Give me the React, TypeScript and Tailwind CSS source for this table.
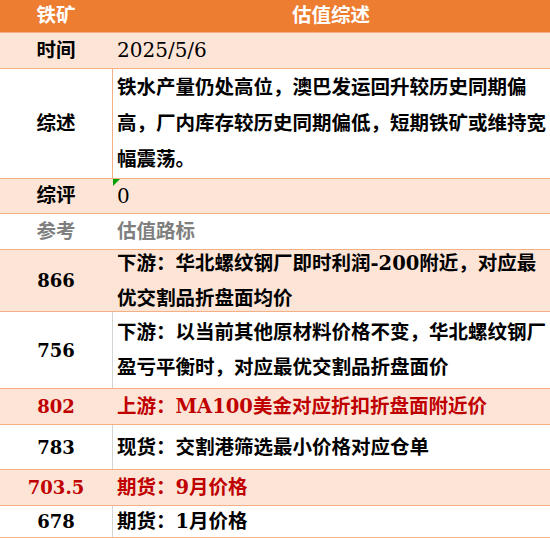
const font = {
  fontFamily: '"DejaVu Serif", "Noto Sans CJK SC", serif',
};

type Row = {
  label: string;
  body: React.ReactNode;
  h: string;
  peach?: boolean;
  red?: boolean;
  grey?: boolean;
  divider?: "orange" | "grey";
  labelNumber?: boolean;
  lead?: string;
  flag?: boolean;
};

const rows: Row[] = [
  {
    label: "时间",
    body: <span className="text-[20px] font-normal">2025/5/6</span>,
    h: "h-[36px]",
    peach: true,
  },
  {
    label: "综述",
    body: (
      <>
        铁水产量仍处高位，澳巴发运回升较历史同期偏
        <br />
        高，厂内库存较历史同期偏低，短期铁矿或维持宽
        <br />
        幅震荡。
      </>
    ),
    h: "h-[110px]",
    divider: "orange",
    lead: "leading-[36px]",
  },
  {
    label: "综评",
    body: <span className="text-[20px] font-normal">0</span>,
    h: "h-[35px]",
    peach: true,
    flag: true,
  },
  { label: "参考", body: "估值路标", h: "h-[36px]", grey: true },
  {
    label: "866",
    body: (
      <>
        下游：华北螺纹钢厂即时利润-200附近，对应最
        <br />
        优交割品折盘面均价
      </>
    ),
    h: "h-[62px]",
    peach: true,
    labelNumber: true,
  },
  {
    label: "756",
    body: (
      <>
        下游：以当前其他原材料价格不变，华北螺纹钢厂
        <br />
        盈亏平衡时，对应最优交割品折盘面价
      </>
    ),
    h: "h-[77px]",
    divider: "grey",
    labelNumber: true,
  },
  {
    label: "802",
    body: "上游：MA100美金对应折扣折盘面附近价",
    h: "h-[36px]",
    peach: true,
    red: true,
    labelNumber: true,
  },
  {
    label: "783",
    body: "现货：交割港筛选最小价格对应仓单",
    h: "h-[45px]",
    divider: "grey",
    labelNumber: true,
  },
  {
    label: "703.5",
    body: "期货：9月价格",
    h: "h-[36px]",
    peach: true,
    red: true,
    labelNumber: true,
  },
  {
    label: "678",
    body: "期货：1月价格",
    h: "h-[32px]",
    divider: "grey",
    labelNumber: true,
  },
];

export default function App() {
  return (
    <div className="w-[550px] h-[538px] overflow-hidden bg-white" style={font}>
      <div className="flex h-[33px] bg-[#ED7D31] text-white font-bold text-[19.5px] border-b border-[#F4B084]">
        <div className="w-[112px] flex items-center justify-center">铁矿</div>
        <div className="flex-1 flex items-center justify-center">估值综述</div>
      </div>
      {rows.map((r) => {
        const color = r.red
          ? "text-[#C00000]"
          : r.grey
            ? "text-[#7F7F7F]"
            : "text-black";
        const divider =
          r.divider === "orange"
            ? "border-l border-[#F4B084]"
            : r.divider === "grey"
              ? "border-l border-[#D4D4D4]"
              : "border-l border-transparent";
        return (
          <div
            key={r.label}
            className={`flex ${r.h} border-b border-[#F4B084] ${r.peach ? "bg-[#FCE4D6]" : "bg-white"} ${color}`}
          >
            <div
              className={`w-[112px] flex items-center justify-center ${r.labelNumber ? "text-[18px] font-bold" : "text-[19.5px] font-bold"}`}
            >
              {r.label}
            </div>
            <div
              className={`relative flex-1 flex items-center pl-[4px] text-[19.5px] font-bold whitespace-nowrap ${r.lead ?? "leading-[35px]"} ${divider}`}
            >
              {r.flag && (
                <div className="absolute left-0 top-0 w-0 h-0 border-t-[7px] border-r-[7px] border-t-[#00A000] border-r-transparent" />
              )}
              <div>{r.body}</div>
            </div>
          </div>
        );
      })}
    </div>
  );
}
